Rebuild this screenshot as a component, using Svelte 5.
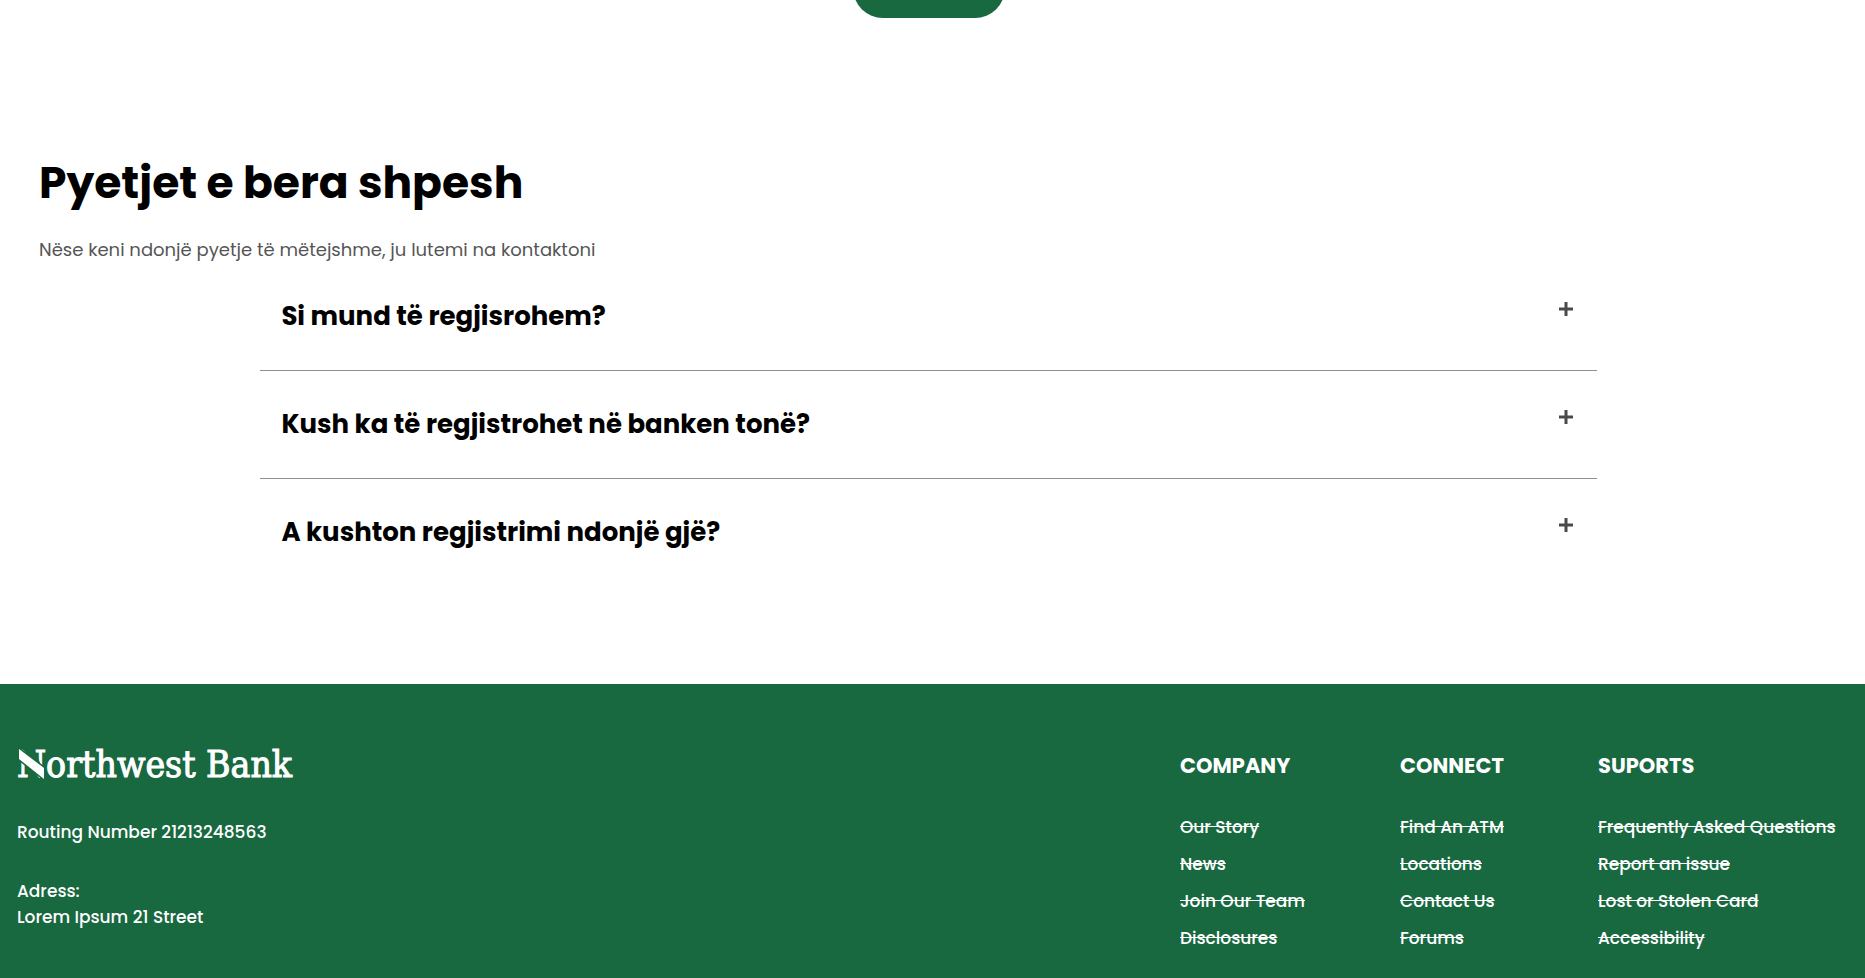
<script>
  const questions = [
    'Si mund të regjisrohem?',
    'Kush ka të regjistrohet në banken tonë?',
    'A kushton regjistrimi ndonjë gjë?'
  ];

  const columns = [
    { title: 'COMPANY', links: ['Our Story', 'News', 'Join Our Team', 'Disclosures'] },
    { title: 'CONNECT', links: ['Find An ATM', 'Locations', 'Contact Us', 'Forums'] },
    {
      title: 'SUPORTS',
      links: ['Frequently Asked Questions', 'Report an issue', 'Lost or Stolen Card', 'Accessibility']
    }
  ];
</script>

<div class="page">
  <div class="action"><span></span></div>

  <main class="faq">
    <h1>Pyetjet e bera shpesh</h1>
    <p class="intro">Nëse keni ndonjë pyetje të mëtejshme, ju lutemi na kontaktoni</p>

    <div class="questions">
      {#each questions as question}
        <h2>
          <button type="button" aria-expanded="false">
            <span>{question}</span>
            <svg viewBox="0 0 14 14" width="14" height="14" aria-hidden="true">
              <path d="M7 0v14M0 7h14" stroke="#4a4a4a" stroke-width="3" />
            </svg>
          </button>
        </h2>
      {/each}
    </div>
  </main>

  <footer>
    <div class="bank">
      <div class="logo">
        <span>Northwest Bank</span>
        <svg viewBox="0 0 30 32" width="30" height="32" aria-hidden="true">
          <path d="M5 1H17L24 17V20Z" fill="#186840" />
          <path d="M2 1 27 20V31L2 11Z" fill="#fff" stroke="#186840" stroke-width="3" paint-order="stroke" />
        </svg>
      </div>
      <p>Routing Number 21213248563</p>
      <address>Adress:<br />Lorem Ipsum 21 Street</address>
    </div>

    <nav>
      {#each columns as column}
        <section>
          <h3>{column.title}</h3>
          <ul>
            {#each column.links as link}
              <li><a href="#top">{link}</a></li>
            {/each}
          </ul>
        </section>
      {/each}
    </nav>
  </footer>
</div>

<style>
  :global(body) {
    margin: 0;
    background: #fff;
  }

  .page {
    display: flex;
    flex-direction: column;
    min-height: 100vh;
    font-family: Poppins, Inter, sans-serif;
    font-size: 18px;
    line-height: 26px;
    color: #000;
  }

  h1, h2, h3, p, ul {
    margin: 0;
    padding: 0;
  }

  .action {
    display: flex;
    justify-content: center;
    align-items: flex-end;
    height: 18px;
    padding-right: 8px;
    overflow: hidden;
  }

  .action span {
    flex: none;
    width: 152px;
    height: 60px;
    border-radius: 30px;
    background: #186840;
  }

  .faq {
    padding: 135px 39px 98px;
  }

  h1 {
    font-size: 44px;
    line-height: 60px;
  }

  .intro {
    margin-top: 24px;
    color: #555;
  }

  .questions {
    width: calc(75% - 4px);
    margin: 0 auto;
    padding-right: 8px;
  }

  h2 + h2 {
    border-top: 1px solid #8f8f8f;
  }

  h2 button {
    display: flex;
    justify-content: space-between;
    align-items: flex-start;
    width: 100%;
    padding: 33px 24px 33px 21px;
    border: 0;
    background: none;
    color: inherit;
    font-family: inherit;
    font-size: 26px;
    font-weight: 700;
    line-height: 41px;
    text-align: left;
  }

  h2 svg {
    margin-top: 6px;
  }

  footer {
    display: flex;
    flex: 1;
    justify-content: space-between;
    align-items: flex-start;
    padding: 61px 25px 24px 17px;
    background: #186840;
    color: #fff;
    font-size: 17px;
    font-weight: 500;
  }

  .logo {
    position: relative;
    font-family: "DejaVu Serif Condensed", "DejaVu Serif", serif;
    font-size: 37px;
    font-weight: 400;
    line-height: 40px;
    -webkit-text-stroke: 1px #fff;
  }

  .logo svg {
    position: absolute;
    top: 3px;
    left: 0;
  }

  .bank p {
    margin-top: 34px;
  }

  address {
    margin-top: 33px;
    font-style: normal;
  }

  nav {
    display: grid;
    grid-template-columns: 220px 198px 242px;
  }

  h3 {
    font-size: 21px;
    line-height: 42px;
  }

  ul {
    display: grid;
    gap: 11px;
    margin-top: 27px;
    list-style: none;
  }

  a {
    color: inherit;
    text-decoration: line-through;
    white-space: nowrap;
  }
</style>
